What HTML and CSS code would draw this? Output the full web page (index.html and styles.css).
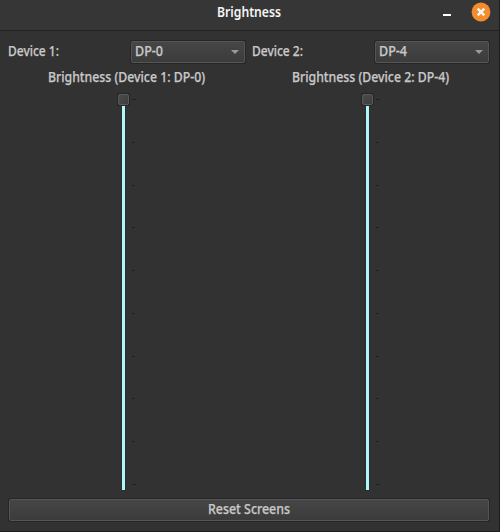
FILE: index.html
```html
<!DOCTYPE html>
<html lang="en">
<head>
<meta charset="utf-8">
<title>Brightness</title>
<link rel="stylesheet" href="styles.css">
</head>
<body>
<div class="window">
  <header class="titlebar">
    <svg class="title" width="64" height="20"><text x="0" y="14" textLength="64" lengthAdjust="spacingAndGlyphs">Brightness</text></svg>
    <div class="controls">
      <span class="minimize"></span>
      <svg class="close" width="20" height="20" viewBox="0 0 20 20"><circle cx="10" cy="10" r="9.4"/><path d="M6.7 6.7l6.6 6.6M13.3 6.7l-6.6 6.6"/></svg>
    </div>
  </header>
  <main class="content">
    <div class="devices">
      <section class="device">
        <div class="picker">
          <svg class="label" width="51" height="20"><text x="0" y="14" textLength="51" lengthAdjust="spacingAndGlyphs">Device 1:</text></svg>
          <div class="box combo">
            <svg class="label" width="28" height="20"><text x="0" y="14" textLength="28" lengthAdjust="spacingAndGlyphs">DP-0</text></svg>
            <span class="arrow"></span>
          </div>
        </div>
        <svg class="label caption" width="157" height="20"><text x="0" y="14" textLength="157" lengthAdjust="spacingAndGlyphs">Brightness (Device 1: DP-0)</text></svg>
        <div class="slider">
          <div class="rail"><span class="thumb"></span><span class="fill"></span></div>
          <div class="ticks"><i></i><i></i><i></i><i></i><i></i><i></i><i></i><i></i><i></i><i></i></div>
        </div>
      </section>
      <section class="device">
        <div class="picker">
          <svg class="label" width="51" height="20"><text x="0" y="14" textLength="51" lengthAdjust="spacingAndGlyphs">Device 2:</text></svg>
          <div class="box combo">
            <svg class="label" width="28" height="20"><text x="0" y="14" textLength="28" lengthAdjust="spacingAndGlyphs">DP-4</text></svg>
            <span class="arrow"></span>
          </div>
        </div>
        <svg class="label caption" width="157" height="20"><text x="0" y="14" textLength="157" lengthAdjust="spacingAndGlyphs">Brightness (Device 2: DP-4)</text></svg>
        <div class="slider">
          <div class="rail"><span class="thumb"></span><span class="fill"></span></div>
          <div class="ticks"><i></i><i></i><i></i><i></i><i></i><i></i><i></i><i></i><i></i><i></i></div>
        </div>
      </section>
    </div>
    <div class="box reset">
      <svg class="label" width="82" height="20"><text x="0" y="14" textLength="82" lengthAdjust="spacingAndGlyphs">Reset Screens</text></svg>
    </div>
  </main>
</div>
</body>
</html>
```
FILE: styles.css
```css
* { box-sizing: border-box; }
body { margin: 0; background: #1c1c1c; }
svg { display: block; flex: none; overflow: visible; }
.window {
  width: 499px;
  height: 531px;
  background: #323232;
  display: flex;
  flex-direction: column;
}
text {
  font: 500 13.5px "Noto Sans", "Open Sans", sans-serif;
  fill: #c8c8c8;
  stroke: #c8c8c8;
  stroke-width: 0.25px;
}
.titlebar {
  height: 31px;
  flex: none;
  display: grid;
  grid-template-columns: 217px 64px 1fr;
  background: #363636;
  border-bottom: 1px solid #222;
}
.title { grid-column: 2; margin-top: 3px; }
.title text { fill: #f4f4f4; stroke: none; font-weight: 600; }
.controls {
  display: flex;
  justify-content: flex-end;
  padding: 2px 8px 0 0;
}
.minimize {
  width: 8px;
  height: 2px;
  margin: 12px 20px 0 0;
  background: #fff;
}
.close circle { fill: #f28c2c; }
.close path { stroke: #f8f4f0; stroke-width: 2.6; fill: none; }
.content {
  flex: 1;
  display: flex;
  flex-direction: column;
  padding: 10px 10px 10px 8px;
}
.devices { display: flex; gap: 7px; height: 458px; }
.device { width: 237px; display: flex; flex-direction: column; }
.picker {
  display: flex;
  justify-content: space-between;
  height: 22px;
  align-items: center;
}
.box {
  height: 22px;
  display: flex;
  align-items: center;
  background: linear-gradient(#464646, #3c3c3c);
  border: 1px solid #555;
  border-radius: 2px;
  box-shadow: 0 0 0 1px #262626;
}
.combo { width: 114px; justify-content: space-between; padding: 0 5px 0 3px; }
.arrow {
  width: 8px;
  height: 4px;
  background: #999;
  clip-path: polygon(0 0, 100% 0, 50% 100%);
}
.caption { margin: 5px 0 0 40px; }
.slider {
  display: flex;
  gap: 3px;
  margin: 6px 0 0 110px;
  height: 396px;
}
.rail { width: 11px; display: flex; flex-direction: column; align-items: center; }
.thumb {
  width: 11px;
  height: 11px;
  flex: none;
  border: 1px solid #5a5a5a;
  border-radius: 2px;
  background: linear-gradient(135deg, #4b4b4b, #3d3d3d);
  box-shadow: 0 0 0 1px #252525;
}
.fill {
  width: 3px;
  flex: 1;
  margin-top: 1px;
  background: #b1f6f8;
  box-shadow: 0 0 0 1px #292e2e;
}
.ticks {
  height: 386px;
  margin-top: 5px;
  display: flex;
  flex-direction: column;
  justify-content: space-between;
}
.ticks i { width: 3px; height: 1px; background: #202020; }
.ticks i:first-child, .ticks i:last-child { width: 4px; }
.reset { width: 480px; margin: 0 0 0 1px; justify-content: center; }
```
